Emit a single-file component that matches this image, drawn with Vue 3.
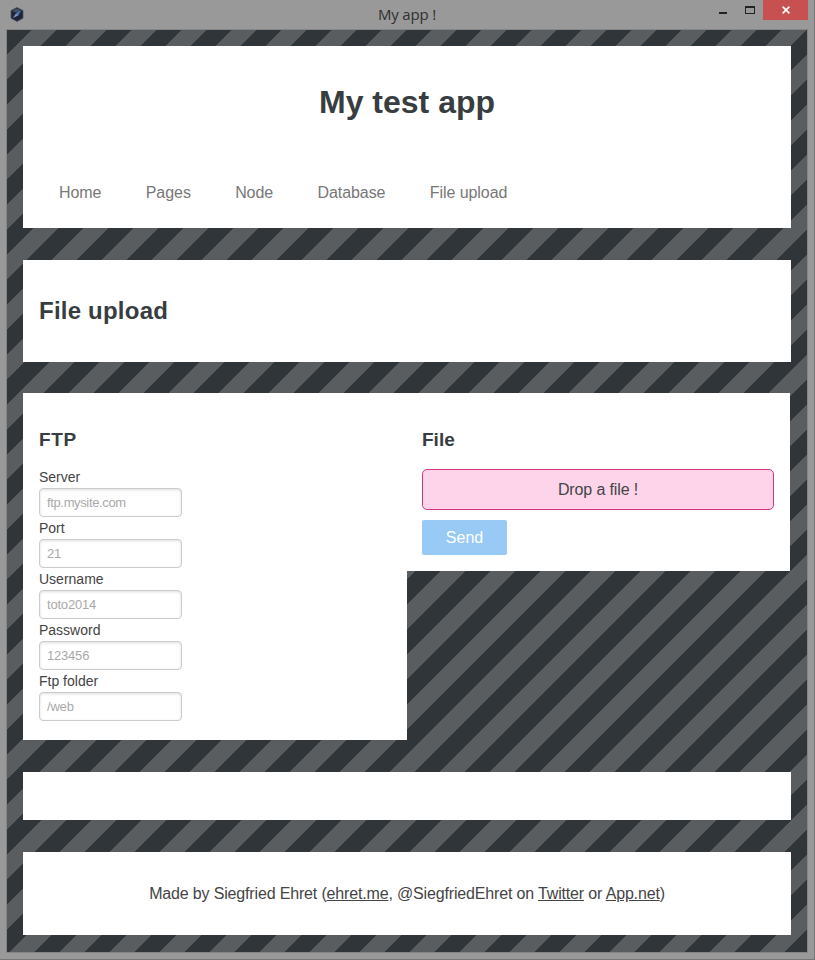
<script setup>
const links = ['Home', 'Pages', 'Node', 'Database', 'File upload']
const fields = [
  { label: 'Server', hint: 'ftp.mysite.com' },
  { label: 'Port', hint: '21' },
  { label: 'Username', hint: 'toto2014' },
  { label: 'Password', hint: '123456' },
  { label: 'Ftp folder', hint: '/web' },
]
</script>

<template>
  <div class="window">
    <div class="titlebar">
      <svg class="app-icon" width="14" height="15" viewBox="0 0 14 15">
        <path d="M7 .5 13 3.6v7.6L7 14.5 1 11.2V3.6z" fill="#1d2536" stroke="#4a5262" stroke-width=".8" />
        <path d="M2 4 7 1.5 12 4 7 6z" fill="#465064" />
        <path d="M10.8 3.8 8.2 8.6 6 6.6z" fill="#4d82cb" />
        <path d="M2.8 11 6 6.6l2.2 2z" fill="#8797b2" />
      </svg>
      <div class="title">My app !</div>
      <div class="controls">
        <button class="ctl min" aria-label="Minimize"><span></span></button>
        <button class="ctl max" aria-label="Maximize"><span></span></button>
        <button class="ctl close" aria-label="Close">
          <svg width="8" height="8" viewBox="0 0 8 8"><path d="M.6.6l6.8 6.8M7.4.6.6 7.4" stroke="#fff" stroke-width="1.7" /></svg>
        </button>
      </div>
    </div>

    <main class="client">
      <header class="card header">
        <h1>My test app</h1>
        <nav>
          <a v-for="l in links" :key="l">{{ l }}</a>
        </nav>
      </header>

      <section class="card heading"><h2>File upload</h2></section>

      <div class="columns">
        <section class="panel ftp">
          <h3>FTP</h3>
          <label v-for="f in fields" :key="f.label">
            <span>{{ f.label }}</span>
            <input type="text" :placeholder="f.hint" />
          </label>
        </section>
        <section class="panel file">
          <h3>File</h3>
          <div class="drop">Drop a file !</div>
          <button class="send">Send</button>
        </section>
      </div>

      <section class="card empty"></section>

      <footer class="card footer">
        <p>Made by Siegfried Ehret (<a>ehret.me</a>, @SiegfriedEhret on <a>Twitter</a> or <a>App.net</a>)</p>
      </footer>
    </main>
  </div>
</template>

<style>
body { background: #999; }
</style>

<style scoped>
* { box-sizing: border-box; }
h1, h2, h3, p { margin: 0; }
.window {
  height: 960px;
  display: flex;
  flex-direction: column;
  padding: 0 7px 6px 6px;
  background: #999;
  border-right: 1px solid #777;
  border-bottom: 1px solid #777;
  font-family: "Liberation Sans", Arial, sans-serif;
  color: #444;
}
.titlebar {
  height: 29px;
  display: grid;
  grid-template-columns: 145px 1fr 145px;
  margin-right: -1px;
}
.app-icon { margin: 7px 0 0 4px; }
.title {
  text-align: center;
  font: 15px/29px "Open Sans", "Noto Sans", sans-serif;
  letter-spacing: -.2px;
  color: #303030;
}
.controls { display: flex; justify-content: flex-end; height: 20px; }
.ctl { border: 0; padding: 0; background: none; display: flex; justify-content: center; align-items: center; }
.min { width: 27px; }
.min span { width: 8px; height: 2px; background: #222; margin-top: 6px; }
.max { width: 27px; }
.max span { width: 10px; height: 8px; border: 1px solid #222; border-top-width: 2px; }
.close { width: 45px; background: #c75050; }
.client {
  width: 802px;
  height: 924px;
  border: 1px solid #858585;
  padding: 16px;
  background: linear-gradient(135deg, #2f3538 25%, #595d60 25%, #595d60 50%, #2f3538 50%, #2f3538 75%, #595d60 75%) 0 0 / 50px 50px;
}
.card { background: #fff; padding: 0 16px; }
.header { height: 182px; }
h1 { padding-top: 37px; font-size: 32px; line-height: 38px; text-align: center; color: #373d40; }
nav { display: flex; gap: 44.3px; padding: 62px 0 0 20px; font-size: 16px; line-height: 20px; letter-spacing: -.06px; color: #777; }
.heading { height: 102px; margin-top: 32px; padding-top: 36px; }
h2 { font-size: 24px; line-height: 29px; letter-spacing: .22px; color: #373d40; }
.columns { display: flex; align-items: flex-start; height: 347px; margin-top: 31px; }
.panel { background: #fff; padding: 36px 16px 0; }
.ftp { width: 384px; height: 347px; }
.file { width: 383px; height: 178px; padding-left: 15px; }
h3 { font-size: 19px; line-height: 22px; margin-bottom: 18px; color: #373d40; }
.ftp h3 { margin-bottom: 15px; letter-spacing: .6px; }
label { display: block; height: 51px; font-size: 14px; }
label span { display: block; height: 22px; padding-top: 1px; line-height: 20px; }
input {
  display: block;
  width: 143px;
  height: 29px;
  padding: 0 7px;
  border: 1px solid #ccc;
  border-radius: 4px;
  box-shadow: inset 0 1px 3px #ddd;
  font: 13px "Liberation Sans", Arial, sans-serif;
  letter-spacing: -.2px;
}
label:first-of-type input { letter-spacing: -.36px; }
input::placeholder { color: #a9a9a9; opacity: 1; }
.drop {
  height: 41px;
  border: 1px solid #d33682;
  border-radius: 5px;
  background: #fdd4ea;
  text-align: center;
  line-height: 39px;
  letter-spacing: -.13px;
}
.send {
  display: block;
  width: 85px;
  height: 35px;
  margin-top: 10px;
  padding: 0;
  border: 0;
  border-radius: 2px;
  background: #99c9f5;
  color: #fff;
  font: 16px "Liberation Sans", Arial, sans-serif;
}
.empty { height: 48px; margin-top: 32px; }
.footer { height: 83px; margin-top: 32px; padding-top: 32px; text-align: center; font-size: 16px; line-height: 20px; letter-spacing: -.16px; }
.footer a { text-decoration: underline; }
</style>
